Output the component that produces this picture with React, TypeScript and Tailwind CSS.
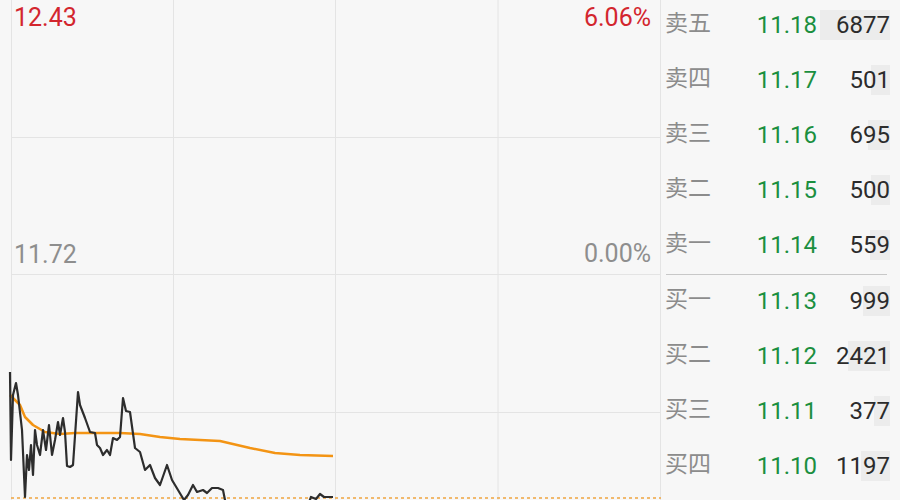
import React from "react";

interface Level {
	label: string;
	price: string;
	volume: number;
}

const ASKS: Level[] = [
	{ label: "卖五", price: "11.18", volume: 6877 },
	{ label: "卖四", price: "11.17", volume: 501 },
	{ label: "卖三", price: "11.16", volume: 695 },
	{ label: "卖二", price: "11.15", volume: 500 },
	{ label: "卖一", price: "11.14", volume: 559 },
];

const BIDS: Level[] = [
	{ label: "买一", price: "11.13", volume: 999 },
	{ label: "买二", price: "11.12", volume: 2421 },
	{ label: "买三", price: "11.11", volume: 377 },
	{ label: "买四", price: "11.10", volume: 1197 },
];

const MAX_VOL = 6877;
const BAR_MAX = 70;

// intraday price trace (x, y in chart pixels)
const PRICE_PTS = [
	[10, 372], [11, 460], [13, 395], [16, 383], [18, 395], [22, 430], [25, 497],
	[27, 455], [29, 470], [31, 445], [33, 475], [35, 430], [37, 445], [40, 455],
	[43, 430], [46, 450], [49, 425], [52, 455], [55, 440], [58, 422], [60, 435],
	[63, 418], [65, 432], [67, 466], [70, 467], [73, 465], [78, 392], [80, 405],
	[85, 418], [90, 432], [95, 433], [97, 445], [100, 448], [103, 455], [107, 450],
	[110, 455], [113, 438], [117, 440], [120, 437], [123, 398], [126, 411],
	[130, 412], [135, 448], [140, 452], [145, 470], [150, 465], [155, 478],
	[160, 485], [167, 465], [172, 480], [178, 490], [184, 500], [188, 495],
	[193, 485], [197, 492], [203, 490], [207, 493], [212, 488], [218, 488],
	[223, 490], [226, 505],
];

const TAIL_PTS = [
	[308, 505], [311, 497], [316, 499], [320, 494], [324, 497], [333, 497],
];

// average price line
const AVG_PTS = [
	[10, 395], [14, 399], [20, 405], [25, 417], [33, 425], [45, 432], [60, 434],
	[75, 433], [90, 433], [120, 433], [140, 434], [160, 437], [180, 439],
	[220, 441], [250, 448], [275, 453], [300, 455], [333, 456],
];

const toPath = (pts: number[][]) => pts.map((p) => p.join(",")).join(" ");

function Chart() {
	return (
		<div className="relative w-[662px] h-[500px] shrink-0">
			<svg width="662" height="500" className="absolute inset-0">
				{/* grid */}
				{[11.5, 173.5, 335.5, 498, 660.5].map((x) => (
					<line key={x} x1={x} y1={0} x2={x} y2={500} stroke="#e4e4e4" strokeWidth="1" />
				))}
				{[137.5, 274.5, 412.5].map((y) => (
					<line key={y} x1={11} y1={y} x2={661} y2={y} stroke="#e4e4e4" strokeWidth="1" />
				))}
				<line
					x1={11}
					y1={498}
					x2={661}
					y2={498}
					stroke="#f0a540"
					strokeWidth="1.5"
					strokeDasharray="3 3"
				/>
				<polyline
					points={toPath(AVG_PTS)}
					fill="none"
					stroke="#f39414"
					strokeWidth="2.5"
					strokeLinejoin="round"
				/>
				<polyline
					points={toPath(PRICE_PTS)}
					fill="none"
					stroke="#2d2d2d"
					strokeWidth="2.2"
					strokeLinejoin="round"
				/>
				<polyline
					points={toPath(TAIL_PTS)}
					fill="none"
					stroke="#2d2d2d"
					strokeWidth="2.2"
					strokeLinejoin="round"
				/>
			</svg>

			{/* axis labels */}
			<span className="absolute left-[14px] top-[-1px] text-[25px] text-[#d3262e]">12.43</span>
			<span className="absolute right-[11px] top-[-1px] text-[25px] text-[#d3262e]">6.06%</span>
			<span className="absolute left-[14px] top-[236px] text-[25px] text-[#8e8e8e]">11.72</span>
			<span className="absolute right-[11px] top-[235px] text-[25px] text-[#8e8e8e]">0.00%</span>
		</div>
	);
}

function Row({ level }: { level: Level }) {
	const barW = Math.sqrt(level.volume / MAX_VOL) * BAR_MAX;
	return (
		<div className="flex items-center h-[55px]">
			<span className="w-[86px] pl-[3px] text-[23px] text-[#8c8c8c]">{level.label}</span>
			<span className="w-[69px] text-right text-[24px] text-[#1b8f3f]">{level.price}</span>
			<div className="relative flex-1 h-[30px] flex items-center justify-end pr-[10px]">
				<div className="absolute right-[10px] top-0 h-full bg-[#ececec]" style={{ width: barW }} />
				<span className="relative text-[24px] text-[#2b2b2b]">{level.volume}</span>
			</div>
		</div>
	);
}

export default function App() {
	return (
		<div
			className="flex w-[900px] h-[500px] overflow-hidden bg-[#f7f7f7]"
			style={{ fontFamily: "Roboto, 'Noto Sans CJK SC', sans-serif" }}
		>
			<Chart />
			<div className="flex-1 flex flex-col -mt-[3px]">
				{ASKS.map((l) => (
					<Row key={l.label} level={l} />
				))}
				<div className="h-px mt-[2px] mx-[4px] mr-[13px] bg-[#c8c8c8]" />
				<div className="-mt-[2px]">
					{BIDS.map((l) => (
						<Row key={l.label} level={l} />
					))}
				</div>
			</div>
		</div>
	);
}
